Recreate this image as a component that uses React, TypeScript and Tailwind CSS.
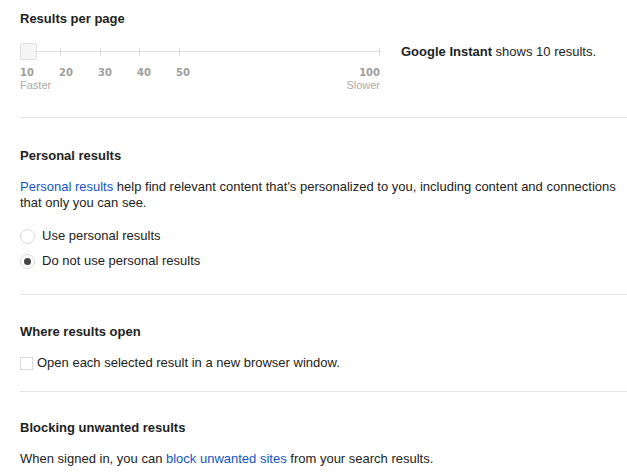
import React from 'react'

const ticks = [
  { label: '10', x: 0 },
  { label: '20', x: 39 },
  { label: '30', x: 78 },
  { label: '40', x: 117 },
  { label: '50', x: 156 },
]

function Section({
  title,
  children,
  className,
}: {
  title: string
  children: React.ReactNode
  className: string
}) {
  return (
    <div className={className}>
      <h2 className="text-[13px] font-bold leading-[16px] text-[#222]">{title}</h2>
      <div className="mt-[15px]">{children}</div>
    </div>
  )
}

function Slider() {
  return (
    <div className="flex items-start">
      <div className="w-[360px]">
        <div className="relative h-[18px]">
          <div className="absolute left-0 right-0 top-[8px] h-px bg-[#e0e0e0]" />
          {[40, 80, 119, 159, 359].map((x) => (
            <div key={x} className="absolute top-[5px] h-[7px] w-px bg-[#d8d8d8]" style={{ left: x }} />
          ))}
          <div className="absolute left-0 top-0 h-[17px] w-[17px] rounded-[2px] border border-[#e0e0e0] bg-[#f5f5f5]" />
        </div>
        <div className="relative mt-[5px] h-[13px] font-['DejaVu_Sans',sans-serif] text-[10px] font-bold leading-[13px] text-[#9e9e9e]">
          {ticks.map((t) => (
            <span key={t.label} className="absolute" style={{ left: t.x }}>
              {t.label}
            </span>
          ))}
          <span className="absolute right-0">100</span>
        </div>
        <div className="flex justify-between text-[11px] leading-[13px] text-[#aaa]">
          <span>Faster</span>
          <span>Slower</span>
        </div>
      </div>
      <div className="ml-[21px] mt-[1px] text-[13px] leading-[16px] text-[#222]">
        <span className="font-bold">Google Instant</span> shows 10 results.
      </div>
    </div>
  )
}

function Radio({ checked, label }: { checked?: boolean; label: string }) {
  return (
    <label className="flex items-center gap-[7px] text-[13px] leading-[16px] text-[#222]">
      <span className="flex h-[15px] w-[15px] items-center justify-center rounded-full border border-[#d9d9d9] bg-white">
        {checked && <span className="h-[7px] w-[7px] rounded-full bg-[#444]" />}
      </span>
      {label}
    </label>
  )
}

export default function App() {
  return (
    <div className="min-h-[476px] bg-white pl-[20px] font-['Liberation_Sans',Arial,sans-serif] text-[#222]">
      <div className="border-b border-[#e5e5e5] pt-[11px] pb-[25px]">
        <h2 className="text-[13px] font-bold leading-[16px]">Results per page</h2>
        <div className="mt-[16px]">
          <Slider />
        </div>
      </div>

      <Section title="Personal results" className="border-b border-[#e5e5e5] pt-[30px] pb-[25px]">
        <p className="w-[600px] text-[13px] leading-[16px]">
          <a className="text-[#15c]">Personal results</a> help find relevant content that's personalized to you, including
          content and connections that only you can see.
        </p>
        <div className="mt-[17px] flex flex-col gap-[9px]">
          <Radio label="Use personal results" />
          <Radio checked label="Do not use personal results" />
        </div>
      </Section>

      <Section title="Where results open" className="border-b border-[#e5e5e5] pt-[29px] pb-[20px]">
        <label className="mt-[2px] flex items-center gap-[4px] text-[13px] leading-[16px]">
          <span className="h-[13px] w-[13px] border border-[#d9d9d9] bg-white" />
          Open each selected result in a new browser window.
        </label>
      </Section>

      <Section title="Blocking unwanted results" className="pt-[28px]">
        <p className="mt-[3px] text-[13px] leading-[16px]">
          When signed in, you can <a className="text-[#15c]">block unwanted sites</a> from your search results.
        </p>
      </Section>
    </div>
  )
}
